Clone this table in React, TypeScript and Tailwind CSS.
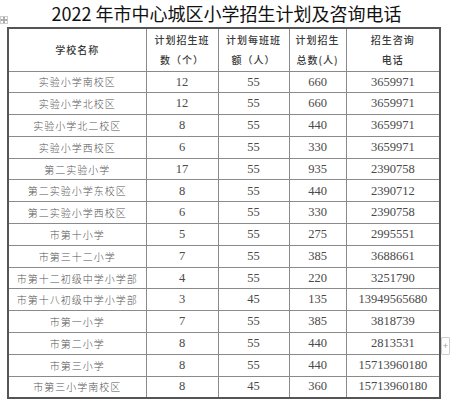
import React from 'react';

type Row = [string, string, string, string, string];

const rows: Row[] = [
  ['实验小学南校区', '12', '55', '660', '3659971'],
  ['实验小学北校区', '12', '55', '660', '3659971'],
  ['实验小学北二校区', '8', '55', '440', '3659971'],
  ['实验小学西校区', '6', '55', '330', '3659971'],
  ['第二实验小学', '17', '55', '935', '2390758'],
  ['第二实验小学东校区', '8', '55', '440', '2390712'],
  ['第二实验小学西校区', '6', '55', '330', '2390758'],
  ['市第十小学', '5', '55', '275', '2995551'],
  ['市第三十二小学', '7', '55', '385', '3688661'],
  ['市第十二初级中学小学部', '4', '55', '220', '3251790'],
  ['市第十八初级中学小学部', '3', '45', '135', '13949565680'],
  ['市第一小学', '7', '55', '385', '3818739'],
  ['市第二小学', '8', '55', '440', '2813531'],
  ['市第三小学', '8', '55', '440', '15713960180'],
  ['市第三小学南校区', '8', '45', '360', '15713960180'],
];

const cjk = "font-['Noto_Sans_CJK_SC',sans-serif]";
const num = "font-['Liberation_Serif','Noto_Sans_CJK_SC',serif]";

const headCell = `border border-[#8a8a8a] text-center align-middle text-[10px] tracking-[1px] leading-[20px] font-medium text-[#3a3a3a] ${cjk}`;
const nameCell = `border border-[#8a8a8a] text-center align-middle text-[10px] tracking-[1px] font-light text-[#555] ${cjk}`;
const numCell = `border border-[#8a8a8a] text-center align-middle text-[12.5px] text-[#4a4a4a] ${num}`;

const MoveHandle = () => (
  <div className="absolute left-0 top-[16px] w-[8px] h-[8px] border border-[#ccc] bg-white flex items-center justify-center">
    <svg width="6" height="6" viewBox="0 0 6 6" fill="none" stroke="#777" strokeWidth="0.8">
      <path d="M3 0.3V5.7M0.3 3H5.7" />
      <path d="M2 1.2L3 0.3L4 1.2M2 4.8L3 5.7L4 4.8M1.2 2L0.3 3L1.2 4M4.8 2L5.7 3L4.8 4" />
    </svg>
  </div>
);

const App = () => {
  return (
    <div className="relative w-[453px] h-[400px] overflow-hidden bg-white">
      <div className={`h-[26px] flex items-center justify-center text-[18px] font-normal text-[#111] leading-none ${cjk}`}>
        2022 年市中心城区小学招生计划及咨询电话
      </div>
      <MoveHandle />
      <table className="ml-[7px] mt-[1px] w-[432px] table-fixed border-collapse border-2 border-[#555]">
        <colgroup>
          <col className="w-[138px]" />
          <col className="w-[72px]" />
          <col className="w-[71px]" />
          <col className="w-[57px]" />
          <col className="w-[94px]" />
        </colgroup>
        <thead>
          <tr className="h-[43px]">
            <th className={headCell}>学校名称</th>
            <th className={headCell}>
              计划招生班
              <br />
              数（个）
            </th>
            <th className={headCell}>
              计划每班班
              <br />
              额（人）
            </th>
            <th className={headCell}>
              计划招生
              <br />
              总数(人)
            </th>
            <th className={headCell}>
              招生咨询
              <br />
              电话
            </th>
          </tr>
        </thead>
        <tbody>
          {rows.map((r, i) => (
            <tr key={i} className="h-[21.8px]">
              <td className={nameCell}>{r[0]}</td>
              <td className={numCell}>{r[1]}</td>
              <td className={numCell}>{r[2]}</td>
              <td className={numCell}>{r[3]}</td>
              <td className={numCell}>{r[4]}</td>
            </tr>
          ))}
        </tbody>
      </table>
      <div className="absolute left-[441px] top-[337px] w-[9px] h-[18px] border border-[#ccc] rounded-[1px] bg-white flex items-center justify-center text-[9px] leading-none text-[#999] font-['Liberation_Sans',sans-serif]">
        +
      </div>
    </div>
  );
};

export default App;
